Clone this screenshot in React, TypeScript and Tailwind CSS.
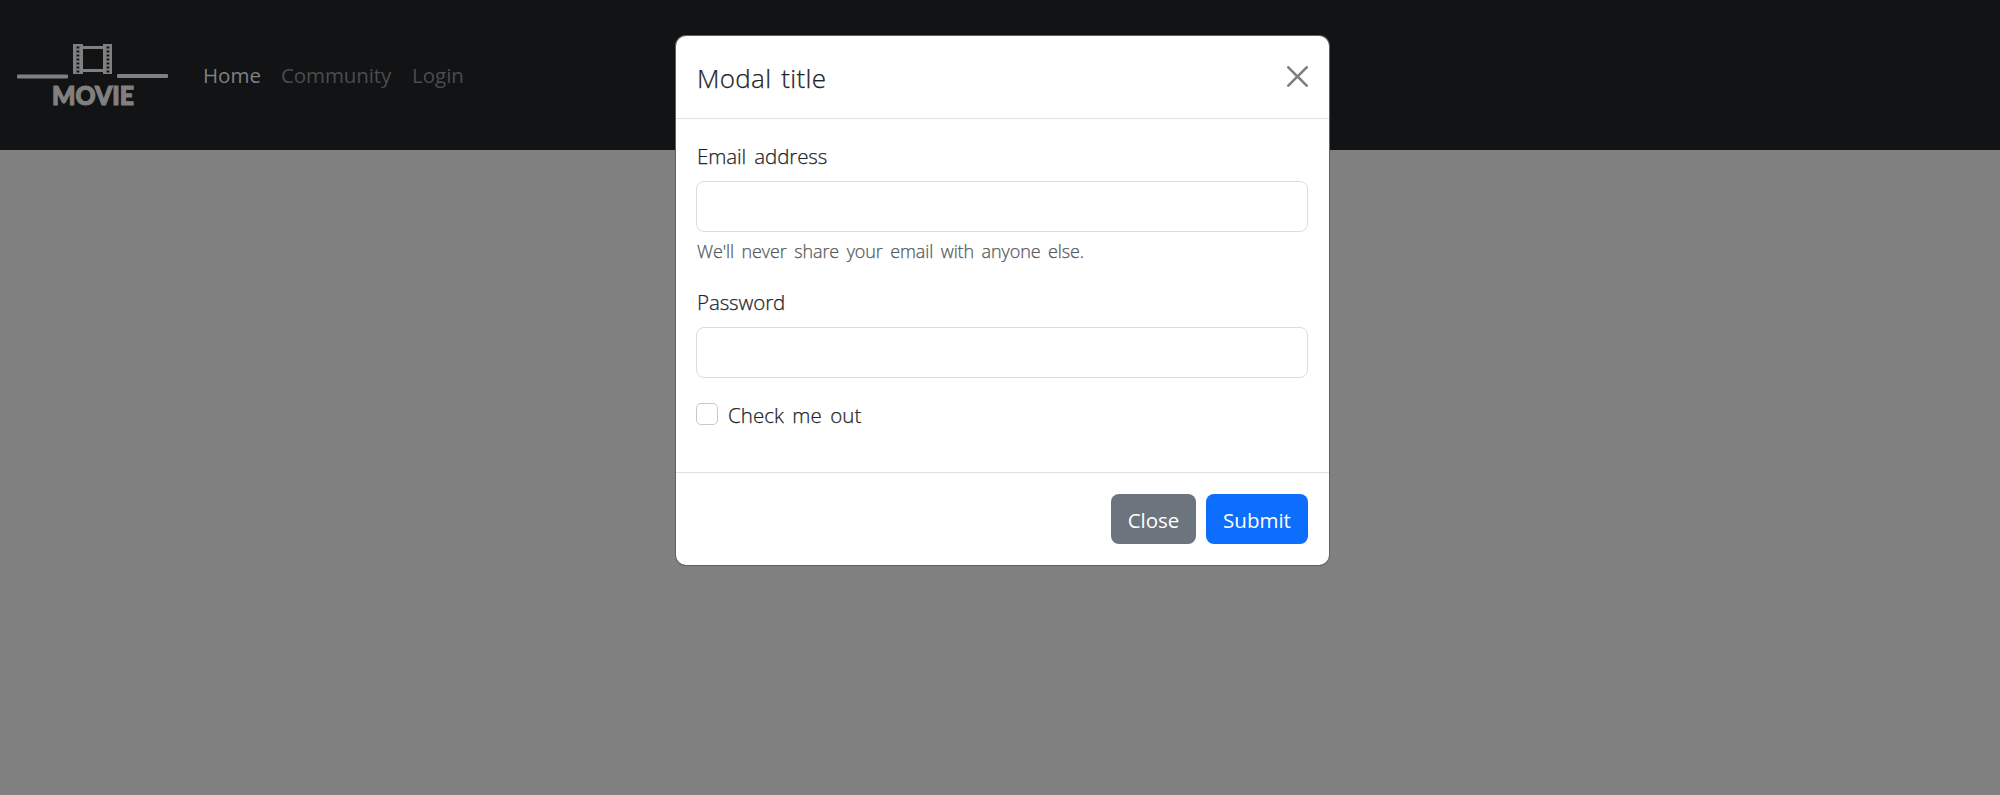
import React from "react";

const holes = [47, 51, 55, 59, 63, 67, 71];

function Logo() {
  return (
    <svg width="152" height="76" viewBox="17 37 152 76" fill="#808080" role="img" aria-label="Movie">
      <rect x="17" y="74.5" width="51" height="4" rx="1" />
      <rect x="117" y="74" width="51" height="4" rx="1" />
      <path fillRule="evenodd" d="M73 44h10v2h20v-2h9v30h-9v-2h-20v2h-10z M83 49v20h20v-20z" />
      {holes.map((y) => (
        <g key={y} fill="#111315">
          <rect x="76.500" y={y - 0.5} width="2.800" height="2" />
          <rect x="106.500" y={y - 0.5} width="2.800" height="2" />
        </g>
      ))}
      <text x="52" y="105.300" fontFamily="Lato" fontWeight="900" fontSize="26" textLength="82" lengthAdjust="spacingAndGlyphs" stroke="#808080" strokeWidth="1.2">
        MOVIE
      </text>
    </svg>
  );
}

function Navbar() {
  return (
    <header className="flex h-[150px] items-center bg-[#111315] pl-[17px]">
      <Logo />
      <nav className="flex items-center gap-[21px] pl-[34px] text-[20.500px] leading-[31px]">
        <a className="w-[57px] whitespace-nowrap text-[#808080]">Home</a>
        <a className="w-[110px] whitespace-nowrap tracking-[-0.1px] text-[#4b4c4d]">Community</a>
        <a className="whitespace-nowrap text-[#4b4c4d]">Login</a>
      </nav>
    </header>
  );
}

function LoginModal() {
  return (
    <section className="flex h-[529px] w-[653px] flex-col rounded-[10px] bg-white font-light text-[#212529] shadow-[0_0_0_1px_#606060] [-webkit-text-stroke:0.25px_currentColor]">
      <div className="flex h-[83px] items-center justify-between border-b border-[#dee2e6] pr-[21px] pl-[21px]">
        <h5 className="pt-[3px] text-[26px] leading-[39px] tracking-[0.3px] [word-spacing:3px]">Modal title</h5>
        <button aria-label="Close dialog" className="-mt-px">
          <svg width="21" height="21" viewBox="0 0 16 16" fill="#7f7f7f">
            <path d="M.293.293a1 1 0 0 1 1.414 0L8 6.586 14.293.293a1 1 0 1 1 1.414 1.414L9.414 8l6.293 6.293a1 1 0 0 1-1.414 1.414L8 9.414l-6.293 6.293a1 1 0 0 1-1.414-1.414L6.586 8 .293 1.707a1 1 0 0 1 0-1.414z" />
          </svg>
        </button>
      </div>
      <form className="flex h-[353px] flex-col pt-[21px] pr-[21px] pl-5 text-[20.500px] leading-[31px] [word-spacing:3px]">
        <label htmlFor="email" className="mt-px pl-px tracking-[-0.1px]">Email address</label>
        <input id="email" className="mt-[9px] h-[51px] shrink-0 rounded-[8px] border border-[#d8dde2] px-4 outline-none" />
        <div className="mt-[5px] pl-px text-[18px] leading-[28px] tracking-[-0.110px] text-[#55595c]">We'll never share your email with anyone else.</div>
        <label htmlFor="password" className="mt-[22px] pl-px tracking-[-0.1px]">Password</label>
        <input id="password" type="password" className="mt-[9px] h-[51px] shrink-0 rounded-[8px] border border-[#d8dde2] px-4 outline-none" />
        <label className="mt-[22px] flex gap-[10px]">
          <input type="checkbox" className="mt-[3px] size-[22px] appearance-none rounded-[5px] border border-[#c6c9cc]" />
          <span className="tracking-[0.05px]">Check me out</span>
        </label>
      </form>
      <div className="flex flex-1 items-center justify-end gap-[10px] border-t border-[#dee2e6] pr-[21px] text-[20.500px] font-normal text-white [-webkit-text-stroke:0]">
        <button className="h-[50px] w-[85px] rounded-[8px] bg-[#6c757d] pt-[3px]">Close</button>
        <button className="h-[50px] w-[102px] rounded-[8px] bg-[#0d6efd] pt-[3px]">Submit</button>
      </div>
    </section>
  );
}

export default function App() {
  return (
    <div className="relative h-[795px] w-full overflow-hidden bg-[#808080] font-['Open_Sans',sans-serif]">
      <Navbar />
      <div className="absolute inset-0 flex items-start justify-center pt-[36px] pl-[5px]">
        <LoginModal />
      </div>
    </div>
  );
}
